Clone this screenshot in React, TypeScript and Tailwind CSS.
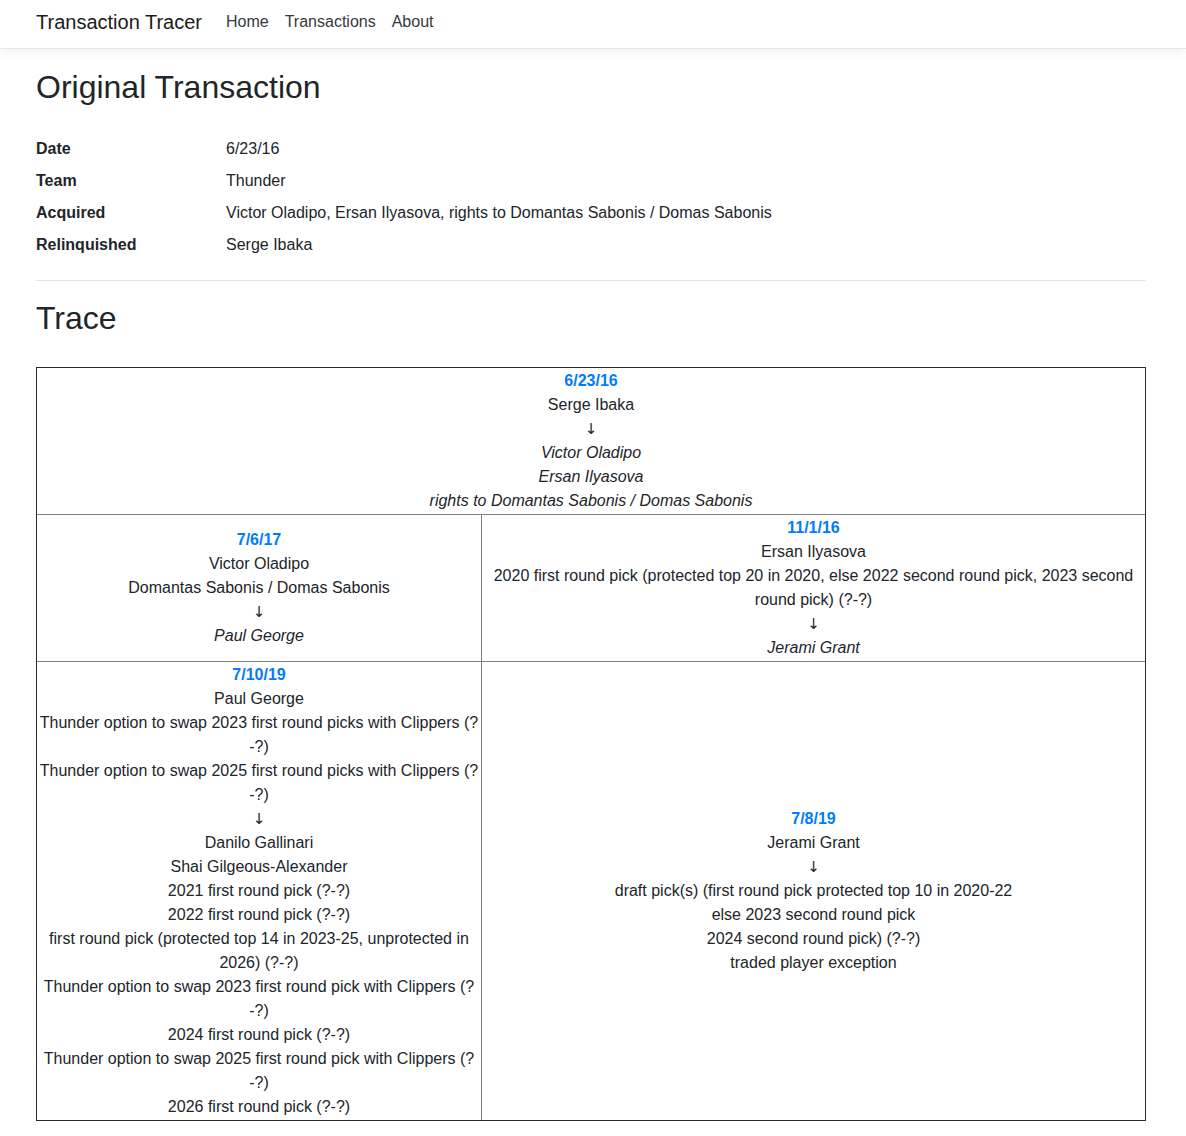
import React from "react"

type Item = { text: string; traced?: boolean }
type Trade = { date: string; out: Item[]; got: Item[] }

const original = [
  { label: "Date", value: "6/23/16" },
  { label: "Team", value: "Thunder" },
  { label: "Acquired", value: "Victor Oladipo, Ersan Ilyasova, rights to Domantas Sabonis / Domas Sabonis" },
  { label: "Relinquished", value: "Serge Ibaka" },
]

const root: Trade = {
  date: "6/23/16",
  out: [{ text: "Serge Ibaka" }],
  got: [
    { text: "Victor Oladipo", traced: true },
    { text: "Ersan Ilyasova", traced: true },
    { text: "rights to Domantas Sabonis / Domas Sabonis", traced: true },
  ],
}

const oladipo: Trade = {
  date: "7/6/17",
  out: [{ text: "Victor Oladipo" }, { text: "Domantas Sabonis / Domas Sabonis" }],
  got: [{ text: "Paul George", traced: true }],
}

const ilyasova: Trade = {
  date: "11/1/16",
  out: [
    { text: "Ersan Ilyasova" },
    { text: "2020 first round pick (protected top 20 in 2020, else 2022 second round pick, 2023 second round pick) (?-?)" },
  ],
  got: [{ text: "Jerami Grant", traced: true }],
}

const george: Trade = {
  date: "7/10/19",
  out: [
    { text: "Paul George" },
    { text: "Thunder option to swap 2023 first round picks with Clippers (?-?)" },
    { text: "Thunder option to swap 2025 first round picks with Clippers (?-?)" },
  ],
  got: [
    { text: "Danilo Gallinari" },
    { text: "Shai Gilgeous-Alexander" },
    { text: "2021 first round pick (?-?)" },
    { text: "2022 first round pick (?-?)" },
    { text: "first round pick (protected top 14 in 2023-25, unprotected in 2026) (?-?)" },
    { text: "Thunder option to swap 2023 first round pick with Clippers (?-?)" },
    { text: "2024 first round pick (?-?)" },
    { text: "Thunder option to swap 2025 first round pick with Clippers (?-?)" },
    { text: "2026 first round pick (?-?)" },
  ],
}

const grant: Trade = {
  date: "7/8/19",
  out: [{ text: "Jerami Grant" }],
  got: [
    { text: "draft pick(s) (first round pick protected top 10 in 2020-22" },
    { text: "else 2023 second round pick" },
    { text: "2024 second round pick) (?-?)" },
    { text: "traded player exception" },
  ],
}

function ItemText({ item }: { item: Item }) {
  // "(?-?)" breaks before the dash in the original
  let body: React.ReactNode = item.text
  if (item.text.endsWith("(?-?)")) {
    body = (
      <>
        {item.text.slice(0, -3)}
        <wbr />
        <span className="whitespace-nowrap">-?)</span>
      </>
    )
  }
  return <div className={item.traced ? "italic" : ""}>{body}</div>
}

function TradeCell({ trade, className = "" }: { trade: Trade; className?: string }) {
  return (
    <div className={`flex flex-col justify-center p-px text-center ${className}`}>
      <div className="font-bold text-[#007bff]">{trade.date}</div>
      {trade.out.map((it, i) => (
        <ItemText key={"o" + i} item={it} />
      ))}
      <div className="font-['DejaVu_Sans',sans-serif] text-[15px]">↓</div>
      {trade.got.map((it, i) => (
        <ItemText key={"g" + i} item={it} />
      ))}
    </div>
  )
}

export default function App() {
  return (
    <div className="min-h-screen bg-white font-['Liberation_Sans',Arial,sans-serif] text-base leading-6 text-[#212529]">
      <nav className="h-[49px] border-b border-[#e5e5e5] bg-white shadow-[0_4px_12px_rgba(0,0,0,0.05)]">
        <div className="ml-[36px] flex h-12 w-[1110px] items-center pb-1">
          <a className="mr-4 text-xl leading-[30px] text-[#1a1a1a]">Transaction Tracer</a>
          <ul className="flex">
            <li><a className="px-2 text-[#343a40]">Home</a></li>
            <li><a className="px-2 text-[#343a40]">Transactions</a></li>
            <li><a className="px-2 text-[#343a40]">About</a></li>
          </ul>
        </div>
      </nav>

      <main className="ml-[36px] w-[1110px] pb-4">
        <h2 className="mt-[19px] text-[32px] font-medium leading-[38px]">Original Transaction</h2>

        <dl className="mt-[31px] grid grid-cols-[190px_1fr] gap-y-2">
          {original.map((row) => (
            <React.Fragment key={row.label}>
              <dt className="font-bold">{row.label}</dt>
              <dd>{row.value}</dd>
            </React.Fragment>
          ))}
        </dl>

        <hr className="mt-[23px] border-t border-black/10" />

        <h2 className="mt-[18px] text-[32px] font-medium leading-[38px]">Trace</h2>

        <div className="mt-[30px] border border-[#2b2b2b]">
          <TradeCell trade={root} />
          <div className="flex border-t border-[#808080]">
            <TradeCell trade={oladipo} className="w-[444px]" />
            <TradeCell trade={ilyasova} className="flex-1 border-l border-[#808080]" />
          </div>
          <div className="flex border-t border-[#808080]">
            <TradeCell trade={george} className="w-[444px]" />
            <TradeCell trade={grant} className="flex-1 border-l border-[#808080]" />
          </div>
        </div>
      </main>
    </div>
  )
}
